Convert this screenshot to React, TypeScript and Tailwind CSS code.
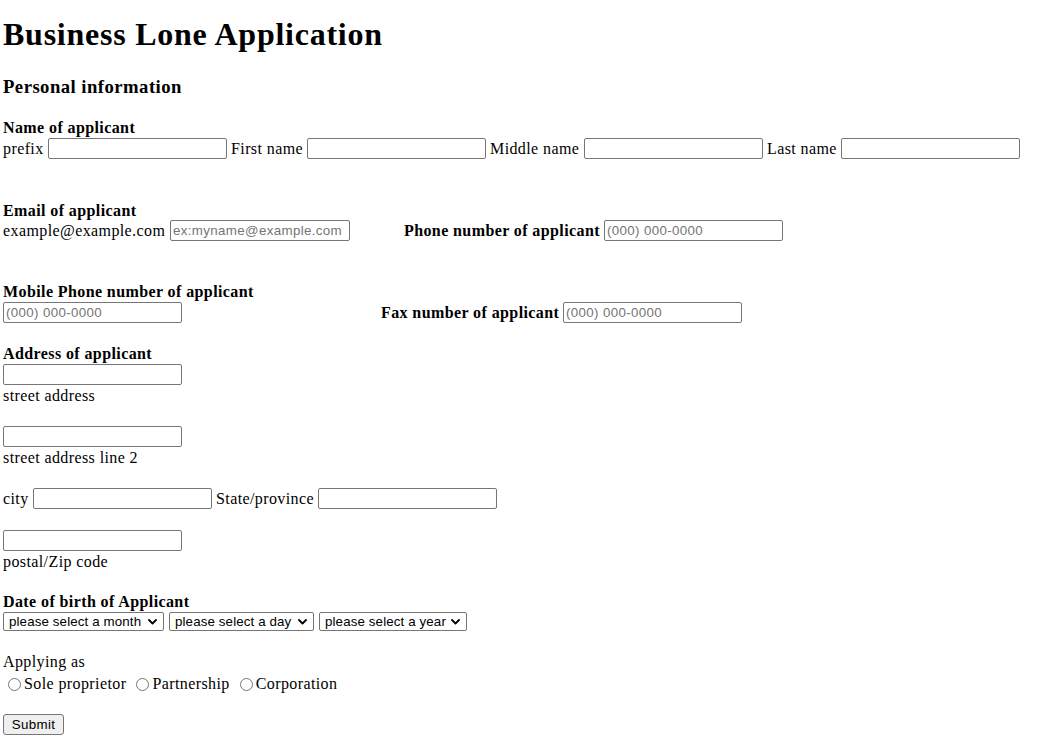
import React from "react";

const inputCls =
  "h-[21px] border border-[#767676] rounded-[2px] px-[2px] bg-white text-black font-['Liberation_Sans',Arial,sans-serif] text-[13.33px] leading-[15px] tracking-[0.35px] placeholder:text-[#757575] outline-none shrink-0";

function TextInput({ w, placeholder }: { w: string; placeholder?: string }) {
  return <input type="text" placeholder={placeholder} className={`${inputCls} ${w}`} />;
}

function Select({ w, label }: { w: string; label: string }) {
  return (
    <div className="relative shrink-0">
      <select
        className={`appearance-none h-[19px] border border-[#767676] rounded-[2px] pl-[5px] pr-[16px] bg-white text-black font-['Liberation_Sans',Arial,sans-serif] text-[13.33px] leading-[15px] tracking-[0.12px] outline-none ${w}`}
        defaultValue=""
      >
        <option value="">{label}</option>
      </select>
      <svg
        className="pointer-events-none absolute right-[7px] top-[7px]"
        width="9"
        height="6"
        viewBox="0 0 9 6"
        fill="none"
      >
        <path d="M1 1 L4.5 4.5 L8 1" stroke="#000" strokeWidth="1.8" strokeLinecap="round" strokeLinejoin="round" />
      </svg>
    </div>
  );
}

function Radio({ label }: { label: string }) {
  return (
    <label className="flex items-center shrink-0">
      <span className="ml-[5px] mr-[3px] w-[13px] h-[13px] rounded-full border border-[#767676] bg-white shrink-0" />
      <span className="whitespace-nowrap">{label}</span>
    </label>
  );
}

export default function App() {
  return (
    <div className="min-h-screen bg-white text-black pl-[3px] pt-[16px] font-['Liberation_Serif','Times_New_Roman',serif] text-[16px] leading-[18px] tracking-[0.4px]">
      <h1 className="text-[32px] font-bold leading-[37px] tracking-[0.75px]">Business Lone Application</h1>
      <h3 className="mt-[23px] text-[18.72px] font-bold leading-[21px] tracking-[0.45px]">Personal information</h3>

      <div className="mt-[21px] pt-[1px] font-bold">Name of applicant</div>
      <div className="mt-[1px] flex items-center h-[21px] whitespace-nowrap">
        <span className="w-[41px]">prefix</span>
        <span className="ml-[4px]"><TextInput w="w-[179px]" /></span>
        <span className="ml-[4px] w-[72px]">First name</span>
        <span className="ml-[4px]"><TextInput w="w-[179px]" /></span>
        <span className="ml-[4px] w-[90px]">Middle name</span>
        <span className="ml-[4px]"><TextInput w="w-[179px]" /></span>
        <span className="ml-[4px] w-[70px]">Last name</span>
        <span className="ml-[4px]"><TextInput w="w-[179px]" /></span>
      </div>

      <div className="mt-[42px] pt-[1px] font-bold">Email of applicant</div>
      <div className="flex items-center h-[21px] whitespace-nowrap">
        <span className="w-[163px]">example@example.com</span>
        <span className="ml-[4px]"><TextInput w="w-[180px]" placeholder="ex:myname@example.com" /></span>
        <span className="ml-[54px] w-[196px] font-bold">Phone number of applicant</span>
        <span className="ml-[4px]"><TextInput w="w-[179px]" placeholder="(000) 000-0000" /></span>
      </div>

      <div className="mt-[41px] pt-[1px] font-bold">Mobile Phone number of applicant</div>
      <div className="mt-[1px] flex items-center h-[21px] whitespace-nowrap">
        <TextInput w="w-[179px]" placeholder="(000) 000-0000" />
        <span className="ml-[199px] w-[178px] font-bold">Fax number of applicant</span>
        <span className="ml-[4px]"><TextInput w="w-[179px]" placeholder="(000) 000-0000" /></span>
      </div>

      <div className="mt-[21px] pt-[1px] font-bold">Address of applicant</div>
      <div className="mt-[1px] flex h-[21px]">
        <TextInput w="w-[179px]" />
      </div>
      <div className="mt-[1px] pt-[1px]">street address</div>

      <div className="mt-[21px] flex h-[21px]">
        <TextInput w="w-[179px]" />
      </div>
      <div className="mt-[1px] pt-[1px]">street address line 2</div>

      <div className="mt-[21px] flex items-center h-[21px] whitespace-nowrap">
        <span className="w-[26px]">city</span>
        <span className="ml-[4px]"><TextInput w="w-[179px]" /></span>
        <span className="ml-[4px] w-[98px]">State/province</span>
        <span className="ml-[4px]"><TextInput w="w-[179px]" /></span>
      </div>

      <div className="mt-[21px] flex h-[21px]">
        <TextInput w="w-[179px]" />
      </div>
      <div className="mt-[1px] pt-[1px]">postal/Zip code</div>

      <div className="mt-[21px] pt-[1px] font-bold">Date of birth of Applicant</div>
      <div className="mt-[1px] flex items-center h-[19px] gap-[5px]">
        <Select w="w-[161px]" label="please select a month" />
        <Select w="w-[145px]" label="please select a day" />
        <Select w="w-[148px]" label="please select a year" />
      </div>

      <div className="mt-[21px] pt-[1px]">Applying as</div>
      <div className="mt-[4px] flex items-center h-[18px] gap-[5px]">
        <Radio label="Sole proprietor" />
        <Radio label="Partnership" />
        <Radio label="Corporation" />
      </div>

      <div className="mt-[21px] flex">
        <button
          type="button"
          className="h-[21px] w-[61px] border border-[#767676] rounded-[3px] bg-[#efefef] text-black font-['Liberation_Sans',Arial,sans-serif] text-[13.33px] leading-[15px] tracking-[0.35px]"
        >
          Submit
        </button>
      </div>
    </div>
  );
}
